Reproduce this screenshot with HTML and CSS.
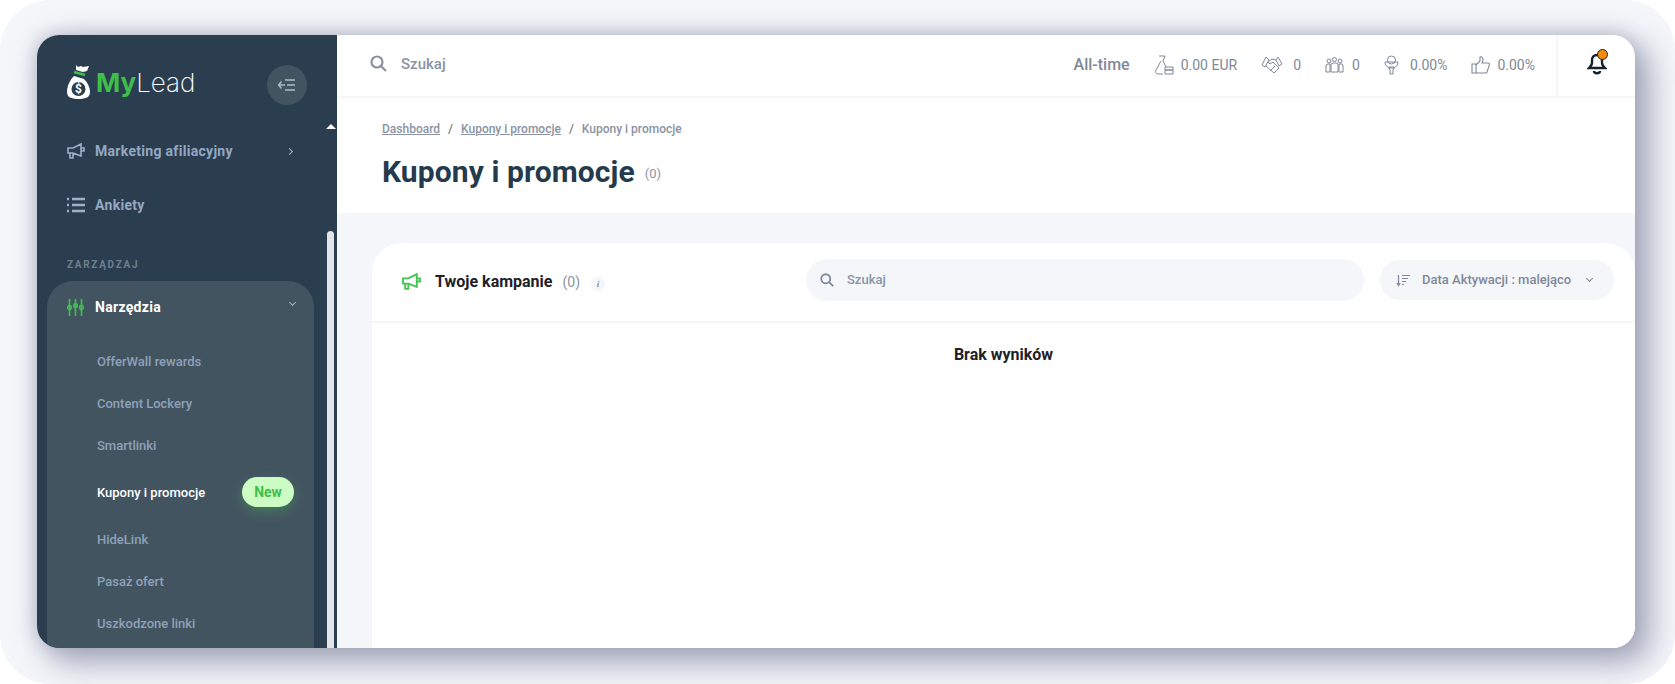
FILE: index.html
```html
<!DOCTYPE html>
<html lang="pl">
<head>
<meta charset="utf-8">
<title>Kupony i promocje</title>
<link rel="stylesheet" href="styles.css">
</head>
<body>
<div class="frame">
  <div class="window">
    <aside class="sidebar">
      <div class="brand">
        <svg class="bag" width="23" height="35" viewBox="0 0 23 35"><path d="M9 1l2 2 3-1 2 1 6-1-2 5-4 1-7-2z" fill="#fff"/><path d="M7 8l11 3" stroke="#3fbf4a" stroke-width="2.800"/><path d="M7 12l10 3c3 3 6 8 6 13 0 5-4 7-11.500 7S0 33 0 28c0-6 3-12 7-16z" fill="#fff"/><circle cx="11.500" cy="25" r="7" fill="#2b3e50"/><text x="11.500" y="29" class="bag-sign">$</text></svg>
        <div class="logo"><span class="logo-my">My</span><span class="logo-lead">Lead</span></div>
        <button class="collapse"><svg width="18" height="14" viewBox="0 0 18 14" fill="none" stroke="#aebccb" stroke-width="1.400"><path d="M7 7H0.500M3.500 3.500L0.500 7l3 3.500M7 2h10M9 7h8M7 12h10"/></svg></button>
      </div>
      <div class="scrollbar"><span class="scroll-arrow"></span><span class="scroll-thumb"></span></div>
      <nav class="nav">
        <a class="nav-item nav-first"><svg width="18" height="16" viewBox="0 0 18 16" fill="none" stroke="#9db0c6" stroke-width="1.600"><path d="M1 5h5l8-4v12L6 10H1zM3 10v5h3v-5M14 5h3v3h-3"/></svg><span>Marketing afiliacyjny</span><i class="chev-right"></i></a>
        <a class="nav-item"><svg width="18" height="16" viewBox="0 0 18 16" fill="none" stroke="#9db0c6" stroke-width="2.400"><path d="M0 2h2M5 2h13M0 8h2M5 8h13M0 14h2M5 14h13"/></svg><span>Ankiety</span></a>
        <div class="nav-label">ZARZĄDZAJ</div>
        <div class="group">
          <a class="group-head"><svg width="17" height="17" viewBox="0 0 17 17" fill="none" stroke="#3fbf4a" stroke-width="1.700"><path d="M2.500 0v17M8.500 0v17M14.500 0v17"/><circle cx="2.500" cy="8.500" r="1.800"/><circle cx="8.500" cy="6.500" r="1.800"/><circle cx="14.500" cy="8.500" r="1.800"/></svg><span>Narzędzia</span><i class="chev-down"></i></a>
          <a class="sub">OfferWall rewards</a>
          <a class="sub">Content Lockery</a>
          <a class="sub">Smartlinki</a>
          <a class="sub sub-active">Kupony i promocje<em class="badge">New</em></a>
          <a class="sub">HideLink</a>
          <a class="sub">Pasaż ofert</a>
          <a class="sub">Uszkodzone linki</a>
        </div>
      </nav>
    </aside>
    <main class="main">
      <header class="topbar">
        <svg class="top-search" width="17" height="17" viewBox="0 0 17 17" fill="none" stroke="#8a93a3" stroke-width="2.200"><circle cx="7" cy="7" r="5.500"/><path d="M11 11l5 5"/></svg>
        <span class="top-placeholder">Szukaj</span>
        <span class="range">All-time</span>
        <span class="stat stat-money"><svg width="20" height="20" viewBox="0 0 20 20" fill="none" stroke="#7f8896" stroke-width="1"><path d="M5 1h6L9 6l3 6M7 6L2 15c-1 2 0 4 2 4h5"/><path d="M11 12h8v3h-8zM11 15h8v4h-8z"/></svg>0.00 EUR</span>
        <span class="stat stat-deal"><svg width="22" height="18" viewBox="0 0 22 18" fill="none" stroke="#7f8896" stroke-width="1"><path d="M5 1L1 9l3 2 4-7zM17 1l4 7-3 2-3-6zM15 4l-4-1-4 3 2 2 3-2 6 6-5 5-8-7M12 12l-3 3M14 10l-3 3"/></svg>0</span>
        <span class="stat stat-team"><svg width="19" height="16" viewBox="0 0 19 16" fill="none" stroke="#7f8896" stroke-width="1"><circle cx="4" cy="4" r="2"/><circle cx="9.500" cy="2.500" r="2"/><circle cx="15" cy="4" r="2"/><path d="M1 15V8l2-1h2v8zM6 15V7l2-1h3l2 1v8zM14 15V7h3l1 1v7z"/></svg>0</span>
        <span class="stat stat-funnel"><svg width="15" height="20" viewBox="0 0 15 20" fill="none" stroke="#7f8896" stroke-width="1"><circle cx="7.500" cy="5" r="4"/><path d="M1 7h13c0 3-2 5-4 6v-1H5v1c-2-1-4-3-4-6zM5 13h5l-1 2v4H6v-4z"/></svg>0.00%</span>
        <span class="stat stat-like"><svg width="19" height="18" viewBox="0 0 19 18" fill="none" stroke="#7f8896" stroke-width="1.100"><path d="M1 8h4v9H1zM5 9l4-4V1c2-1 3 1 3 3l-1 3h6c1 0 2 1 1 3l-2 6c0 1-1 1-2 1H5"/></svg>0.00%</span>
        <span class="bell-box"><span class="bell"><svg width="20" height="23" viewBox="0 0 20 23" fill="none" stroke="#16222d" stroke-width="2.400"><path d="M10 3c-3 0-5 2-5 5v3c0 2-1 3-3 5h16c-2-2-3-3-3-5V8c0-3-2-5-5-5zM7 19c0 3 6 3 6 0"/></svg><span class="bell-dot"></span></span></span>
      </header>
      <section class="page-head">
        <div class="crumbs"><a>Dashboard</a><b>/</b><a>Kupony i promocje</a><b>/</b><span>Kupony i promocje</span></div>
        <h1>Kupony i promocje<small>(0)</small></h1>
      </section>
      <section class="content">
        <div class="card">
          <div class="card-head">
            <svg class="card-icon" width="19" height="17" viewBox="0 0 18 16" fill="none" stroke="#45c452" stroke-width="1.800"><path d="M1 5h5l8-4v12L6 10H1zM3 10v5h3v-5M14 5h3v3h-3"/></svg>
            <span class="card-title">Twoje kampanie</span>
            <span class="card-count">(0)</span>
            <span class="info">i</span>
            <div class="pill-search"><svg width="14" height="14" viewBox="0 0 17 17" fill="none" stroke="#7f8896" stroke-width="2.200"><circle cx="7" cy="7" r="5.500"/><path d="M11 11l5 5"/></svg><span>Szukaj</span></div>
            <div class="pill-sort"><svg width="14" height="13" viewBox="0 0 14 13" fill="none" stroke="#7f8896" stroke-width="1.200"><path d="M2.500 1v10M0.800 9l1.700 2.500L4.200 9M6 1.500h8M6 4.500h6M6 7.500h4M6 10.500h2"/></svg><span>Data Aktywacji : malejąco</span><i class="chev-sort"></i></div>
          </div>
          <div class="empty">Brak wyników</div>
        </div>
      </section>
    </main>
  </div>
</div>
</body>
</html>
```
FILE: styles.css
```css
* { box-sizing: border-box; }
html, body { margin: 0; height: 100%; background: #fff; overflow: hidden; }
body { font-family: Roboto, "Liberation Sans", sans-serif; }
a { display: block; }
.frame {
  width: 1675px; height: 684px; border-radius: 50px; background: #f4f6fa;
  padding: 35px 40px 36px 37px; overflow: hidden;
}
.window {
  display: flex; height: 613px; border-radius: 22px; background: #fff; position: relative;
  box-shadow: 12px 12px 30px 4px rgba(120,125,150,.62), -2px -2px 18px rgba(120,125,150,.32);
}

/* sidebar */
.sidebar {
  width: 300px; flex: none; background: #2b3e50; position: relative; overflow: hidden;
  border-radius: 22px 0 0 22px; color: #94a8c1;
}
.brand { display: flex; align-items: center; margin-top: 28px; padding: 0 30px; height: 36px; }
.bag { flex: none; overflow: visible; }
.bag-sign { font: 700 12px Roboto, sans-serif; fill: #fff; text-anchor: middle; }
.logo { margin: 4px 0 0 6px; font-family: Inter, sans-serif; font-size: 26px; line-height: 36px; }
.logo-my { color: #3fbf4a; font-weight: 700; }
.logo-lead { color: #fff; font-weight: 200; }
.collapse {
  width: 40px; height: 40px; border-radius: 50%; border: 0; padding: 0; margin: 7px 0 0 auto; flex: none;
  background: #435461; display: flex; align-items: center; justify-content: center;
}
.scrollbar { position: absolute; left: 290px; top: 0; bottom: 0; width: 7px; }
.scroll-arrow {
  position: absolute; top: 89px; left: -1px; width: 0; height: 0;
  border: 5px solid transparent; border-top: 0; border-bottom: 5px solid #fff;
}
.scroll-thumb { position: absolute; top: 196px; bottom: 0; left: 0; width: 7px; background: #e2e4e9; border-radius: 4px 4px 0 0; }
.nav-item {
  display: flex; align-items: center; height: 54px; padding: 0 0 0 30px;
  font-size: 14px; font-weight: 700; letter-spacing: .3px; color: #94a8c1;
}
.nav-first { margin-top: 25px; }
.nav-item span { margin-left: 10px; }
.chev-right {
  width: 5px; height: 5px; border: solid #a6b6c8; border-width: 1.800px 1.800px 0 0;
  transform: rotate(45deg); margin-left: 54px;
}
.nav-label {
  margin: 26px 0 0 30px; height: 23px; font-size: 10px; font-weight: 700; letter-spacing: 1.700px;
  color: #6d7f8f; line-height: 14px;
}
.group {
  margin-left: 10px; width: 267px; background: #435461; border-radius: 26px 26px 0 0; height: 400px;
}
.group-head { display: flex; align-items: center; height: 52px; padding-left: 20px; font-size: 14px; font-weight: 700; letter-spacing: .3px; color: #fff; }
.group-head span { margin-left: 11px; }
.chev-down {
  width: 5px; height: 5px; border: solid #a6b6c8; border-width: 0 1.800px 1.800px 0;
  transform: rotate(45deg); margin: -10px 0 0 129px;
}
.sub {
  display: flex; align-items: center; height: 42px; padding: 0 20px 0 50px;
  font-size: 13px; font-weight: 500; color: #8ea1b9;
}
.group-head + .sub { margin-top: 7px; }
.sub-active { height: 52px; color: #fff; justify-content: space-between; }
.badge {
  width: 52px; height: 30px; border-radius: 15px; background: #ccfcc3; color: #3fbf4a; margin-top: 0;
  font-style: normal; font-size: 14px; font-weight: 700; display: flex; align-items: center; justify-content: center;
  box-shadow: 0 5px 12px rgba(70,190,80,.35);
}

/* main */
.main { flex: 1; min-width: 0; display: flex; flex-direction: column; border-radius: 0 22px 22px 0; overflow: hidden; }
.topbar { display: flex; align-items: center; height: 63px; flex: none; padding-left: 33px; border-bottom: 2px solid #f4f6fa; color: #7f8896; }
.top-search { margin-top: -4px; }
.top-placeholder { margin: -4px 0 0 14px; font-size: 15px; font-weight: 500; color: #8a93a3; }
.range { margin: -2px 0 0 auto; font-size: 16px; font-weight: 500; color: #7f8896; }
.stat { display: flex; align-items: center; margin-top: -2px; font-size: 14px; color: #7f8896; }
.stat-money { margin-left: 24px; gap: 7px; }
.stat-deal { margin-left: 24px; gap: 10px; }
.stat-team { margin-left: 24px; gap: 8px; }
.stat-funnel { margin-left: 24px; gap: 11px; }
.stat-like { margin-left: 24px; gap: 7px; }
.bell-box { display: flex; align-items: center; justify-content: center; width: 79px; height: 61px; margin-left: 21px; border-left: 2px solid #f4f6fa; }
.bell { position: relative; display: block; height: 23px; top: -2px; }
.bell-dot { position: absolute; left: 10px; top: -3px; width: 11px; height: 11px; border-radius: 50%; background: #f58a0b; border: 1px solid #16222d; }
.page-head { flex: none; height: 115px; padding: 23px 0 0 45px; background: #fff; }
.crumbs { display: flex; align-items: center; height: 16px; font-size: 12px; font-weight: 500; color: #8a93a3; }
.crumbs a { text-decoration: underline; }
.crumbs b { margin: 0 8px; font-weight: 400; color: #555e6c; }
h1 { margin: 15px 0 0; font-size: 30px; line-height: 40px; font-weight: 700; letter-spacing: .1px; color: #253b4d; display: flex; align-items: center; }
h1 small { margin: 4px 0 0 10px; font-size: 13px; line-height: 16px; font-weight: 400; letter-spacing: 0; color: #8a93a3; }
.content { flex: 1; min-height: 0; background: #f4f6fa; padding: 30px 0 0 35px; overflow: hidden; }
.card { background: #fff; border-radius: 30px 30px 0 0; height: 420px; }
.card-head { display: flex; align-items: center; height: 80px; padding: 0 21px 4px 30px; border-bottom: 2px solid #f4f6fa; }
.card-icon { margin-top: 3px; }
.card-title { margin: 3px 0 0 14px; font-size: 16px; font-weight: 700; color: #1d2127; }
.card-count { margin: 3px 0 0 10px; font-size: 14px; color: #8a93a3; }
.info {
  width: 14px; height: 14px; margin: 7px 0 0 11px; border-radius: 50%; background: #f4f6fa; color: #7f8896;
  font: italic 700 9px/14px "Liberation Serif", serif; text-align: center;
}
.pill-search {
  display: flex; align-items: center; width: 558px; height: 42px; margin-left: auto; padding-left: 14px; border-radius: 21px; background: #f4f6fa;
  font-size: 13px; font-weight: 500; color: #8a93a3;
}
.pill-search span { margin: -2px 0 0 13px; }
.pill-sort {
  display: flex; align-items: center; width: 234px; height: 40px; margin-left: 16px; padding-left: 16px; border-radius: 20px; background: #f4f6fa;
  font-size: 13px; font-weight: 500; color: #7f8896;
}
.pill-sort span { margin: -2px 0 0 12px; }
.chev-sort { width: 5px; height: 5px; border: solid #7f8896; border-width: 0 1.800px 1.800px 0; transform: rotate(45deg); margin: -3px 0 0 16px; }
.empty { padding-top: 22px; text-align: center; font-size: 16px; line-height: 20px; font-weight: 700; color: #1d2127; }
```
